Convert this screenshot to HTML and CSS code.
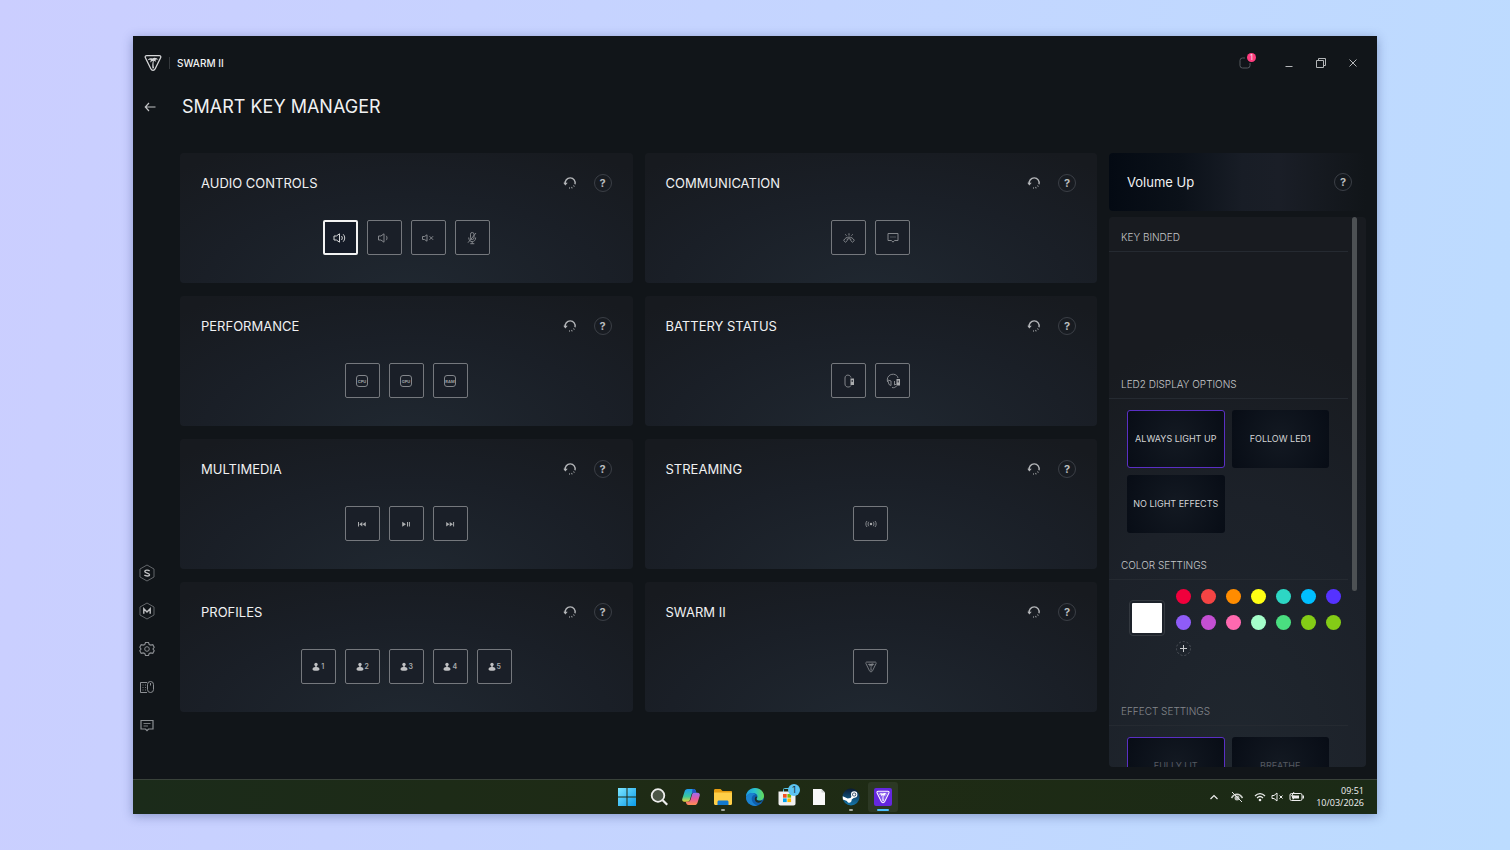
FILE: index.html
```html
<!DOCTYPE html>
<html lang="en">
<head>
<meta charset="utf-8">
<title>Swarm II - Smart Key Manager</title>
<link rel="stylesheet" href="styles.css">
</head>
<body>
<svg class="defs" aria-hidden="true">
  <symbol id="logo" viewBox="0 0 18 18">
    <path d="M2.8 1.6h12.4c1.4 0 2 1 1.4 2.2l-5.4 11c-1 2-3.400 2-4.400 0l-5.400-11c-.6-1.200 0-2.200 1.400-2.200z" fill="none" stroke="currentColor" stroke-width="1.300"/>
    <path d="M3.800 6.200c1-2.200 3-2.400 4.600-1.600 1.600-1.300 4.600-1 6 1.400-1.200-.6-2.200-.6-3 0l.9 2.100c-1-.9-1.700-1.300-2.500-1.400-.5 2.500-.3 5 .3 7.500l-1.700.3c-.3-3-.1-5.500.5-7.600-1 0-1.800.6-2.600 1.800 0-1.100.1-1.900.6-2.700-1.100-.5-2-.4-3.100.2z" fill="currentColor"/>
  </symbol>
  <symbol id="reset" viewBox="0 0 14 14">
    <path d="M2.300 8A5 5 0 1 1 12 8.200" fill="none" stroke="currentColor" stroke-width="1.400"/>
    <path d="M.3 6.800h4.400L2.400 9.600z" fill="currentColor"/>
    <path d="M11.200 9.700l-.5.700M9.300 11.500l-.8.400M6.900 12.100h-.7" stroke="currentColor" stroke-width="1.500"/>
  </symbol>
</svg>

<main class="window">
  <div class="app">
    <header class="titlebar">
      <svg class="brand-mark"><use href="#logo"/></svg>
      <span class="brand-name">SWARM II</span>
      <div class="window-controls">
        <button class="plain notice" aria-label="Notifications">
          <svg width="14" height="14" viewBox="0 0 14 14"><path d="M7 2H4.500a2.500 2.500 0 0 0-2.500 2.500v5A2.500 2.500 0 0 0 4.500 12h5A2.500 2.500 0 0 0 12 9.500V7" fill="none" stroke="#565a5f"/></svg>
          <span class="badge">1</span>
        </button>
        <button class="plain" aria-label="Minimize"><svg width="12" height="12" viewBox="0 0 12 12"><path d="M2.500 9.500h7" stroke="#b4b6b8"/></svg></button>
        <button class="plain" aria-label="Restore"><svg width="12" height="12" viewBox="0 0 12 12"><path d="M1.500 3.500h7v7h-7zM3.500 3.500v-2h7v7h-2" fill="none" stroke="#b4b6b8"/></svg></button>
        <button class="plain" aria-label="Close"><svg width="12" height="12" viewBox="0 0 12 12"><path d="M2.500 2.500l7 7M9.500 2.500l-7 7" stroke="#b4b6b8"/></svg></button>
      </div>
    </header>

    <div class="page-head">
      <button class="plain back" aria-label="Back"><svg width="12" height="10" viewBox="0 0 12 10"><path d="M11.500 5H1.500M5 1L1.300 5 5 9" fill="none" stroke="#c2c3c5" stroke-width="1.200"/></svg></button>
      <h1>SMART KEY MANAGER</h1>
    </div>

    <div class="content">
      <nav class="rail">
        <button class="plain" aria-label="Store"><svg viewBox="0 0 18 18"><path d="M9 1l7 4v8l-7 4-7-4V5z" fill="none" stroke="#63666a"/><path d="M11.600 6.900c-1-1-4.800-1.200-4.800.5S11.500 9 11.500 10.700s-4 1.500-5.100.3" fill="none" stroke="#c2c3c5" stroke-width="1.400"/></svg></button>
        <button class="plain" aria-label="Macros"><svg viewBox="0 0 18 18"><path d="M9 1l7 4v8l-7 4-7-4V5z" fill="none" stroke="#63666a"/><path d="M5.800 11.700V6.800L9 10l3.200-3.200v4.900" fill="none" stroke="#c2c3c5" stroke-width="1.400"/></svg></button>
        <button class="plain" aria-label="Settings"><svg viewBox="0 0 18 18"><path d="M7.500 2.500h3l.7 2 1.600.6 2-.4 1.400 2.600L15 9l1.200 1.700-1.400 2.600-2-.4-1.600.6-.7 2h-3l-.7-2-1.600-.6-2 .4-1.400-2.600L3 9 1.800 7.300l1.400-2.600 2 .4 1.600-.6z" fill="none" stroke="#8d9094" stroke-width="1.100"/><circle cx="9" cy="9" r="2.300" fill="none" stroke="#8d9094"/></svg></button>
        <button class="plain" aria-label="Devices"><svg viewBox="0 0 18 18"><path d="M9 14.500H2.500v-10H9" fill="none" stroke="#8d9094"/><path d="M4.500 7h1M7 7h1M4.500 9.500h1M7 9.500h1M4.500 12h1M7 12h1" stroke="#76797d"/><rect x="9.500" y="3.500" width="6" height="11" rx="3" fill="none" stroke="#8d9094"/><path d="M12.500 5v2.500" stroke="#8d9094"/></svg></button>
        <button class="plain" aria-label="Feedback"><svg viewBox="0 0 18 18"><path d="M3 4.500h12v8.500h-4.500L9 14.700 7.500 13H3z" fill="none" stroke="#8d9094" stroke-width="1.200"/><path d="M5.500 7.500h7M5.500 10h4.500" stroke="#76797d"/></svg></button>
      </nav>

      <div class="cards">
        <section class="card">
          <div class="card-head"><h2>AUDIO CONTROLS</h2><button class="plain reset" aria-label="Reset"><svg><use href="#reset"/></svg></button><button class="help" aria-label="Help">?</button></div>
          <div class="keys">
            <button class="key selected" aria-label="Volume up"><svg viewBox="0 0 16 16"><path d="M2 6v4h2.400L7.500 12.200V3.800L4.400 6zM9.500 6c1 1.200 1 2.800 0 4M11.200 4.300c2 2.200 2 5.200 0 7.400" class="line"/></svg></button>
            <button class="key" aria-label="Volume down"><svg viewBox="0 0 16 16"><path d="M2.500 6v4h2.400L8 12.200V3.800L4.900 6zM10.200 5.800c1.100 1.200 1.100 3.200 0 4.400" class="line"/></svg></button>
            <button class="key" aria-label="Mute"><svg viewBox="0 0 16 16"><path d="M2.500 6.500v3h2L7 11.200V4.800L4.500 6.500zM9.500 6.200l3.600 3.600M13.100 6.200L9.500 9.800" class="line"/></svg></button>
            <button class="key" aria-label="Mute microphone"><svg viewBox="0 0 16 16"><rect x="6.500" y="2.500" width="3.500" height="7" rx="1.700" class="line"/><path d="M4.700 7.500c0 5.500 7 5.500 7 0M8.200 11.600v2.200M6.300 13.700h4M4 12.700L12 3" class="line"/></svg></button>
          </div>
        </section>
        <section class="card">
          <div class="card-head"><h2>COMMUNICATION</h2><button class="plain reset" aria-label="Reset"><svg><use href="#reset"/></svg></button><button class="help" aria-label="Help">?</button></div>
          <div class="keys">
            <button class="key" aria-label="Answer call"><svg viewBox="0 0 16 16"><path d="M2.700 10.500c2-4.500 8.600-4.500 10.600 0l-1.800 1.700-1.800-1.700V9c-1-.4-2.400-.4-3.400 0v1.500l-1.800 1.700zM8 5.500V3.300M5.500 5.700L4.300 4.300M10.500 5.700l1.200-1.400" class="line"/></svg></button>
            <button class="key" aria-label="Chat"><svg viewBox="0 0 16 16"><path d="M3 3.500h10v7H9.500L8 12.200 6.500 10.500H3z" class="line"/><path d="M5.500 7h5" class="line" stroke-dasharray="1"/></svg></button>
          </div>
        </section>
        <section class="card">
          <div class="card-head"><h2>PERFORMANCE</h2><button class="plain reset" aria-label="Reset"><svg><use href="#reset"/></svg></button><button class="help" aria-label="Help">?</button></div>
          <div class="keys">
            <button class="key" aria-label="CPU"><svg viewBox="0 0 16 16"><rect x="2.500" y="2.500" width="11" height="11" rx="2.500" class="line"/><text x="8" y="9.600" class="chip">CPU</text></svg></button>
            <button class="key" aria-label="GPU"><svg viewBox="0 0 16 16"><rect x="2.500" y="2.500" width="11" height="11" rx="2.500" class="line"/><text x="8" y="9.600" class="chip">GPU</text></svg></button>
            <button class="key" aria-label="RAM"><svg viewBox="0 0 16 16"><rect x="2.500" y="2.500" width="11" height="11" rx="2.500" class="line"/><text x="8" y="9.600" class="chip">RAM</text></svg></button>
          </div>
        </section>
        <section class="card">
          <div class="card-head"><h2>BATTERY STATUS</h2><button class="plain reset" aria-label="Reset"><svg><use href="#reset"/></svg></button><button class="help" aria-label="Help">?</button></div>
          <div class="keys">
            <button class="key" aria-label="Mouse battery"><svg viewBox="0 0 16 16"><path d="M10 4.500C9.500 1.500 4 1 4 5v6c0 4 5.500 3.500 6 1.500" class="line"/><rect x="9.500" y="5.500" width="3.500" height="6.500" class="solid"/><path d="M11.200 7v2" stroke="#1a1f28"/></svg></button>
            <button class="key" aria-label="Headset battery"><svg viewBox="0 0 16 16"><path d="M2.500 9c-2-9 9.500-10 10.500-4M2.500 6.500l1.500 5 2 1V8L3 7M9.500 8v4l2-1M7 14.500c2 .5 3.500 0 4.500-1.500" class="line"/><rect x="11.500" y="6" width="3.500" height="6.500" class="solid"/><path d="M13.200 7.500v2" stroke="#1a1f28"/></svg></button>
          </div>
        </section>
        <section class="card">
          <div class="card-head"><h2>MULTIMEDIA</h2><button class="plain reset" aria-label="Reset"><svg><use href="#reset"/></svg></button><button class="help" aria-label="Help">?</button></div>
          <div class="keys">
            <button class="key" aria-label="Previous"><svg viewBox="0 0 16 16"><path d="M4 6h1v4.500H4zM8.300 6v4.500L5.300 8.200zM11.800 6v4.500L8.500 8.200z" class="solid"/></svg></button>
            <button class="key" aria-label="Play or pause"><svg viewBox="0 0 16 16"><path d="M4.200 5.700v5L8 8.200zM9 6h1v4.500H9zM10.900 6h1v4.500h-1z" class="solid"/></svg></button>
            <button class="key" aria-label="Next"><svg viewBox="0 0 16 16"><path d="M4.200 6v4.500l3.300-2.300zM7.700 6v4.500L11 8.200zM11.100 6h1v4.500h-1z" class="solid"/></svg></button>
          </div>
        </section>
        <section class="card">
          <div class="card-head"><h2>STREAMING</h2><button class="plain reset" aria-label="Reset"><svg><use href="#reset"/></svg></button><button class="help" aria-label="Help">?</button></div>
          <div class="keys">
            <button class="key" aria-label="Broadcast"><svg viewBox="0 0 16 16"><path d="M4 5c-1.500 1.500-1.500 4.500 0 6M5.800 5.800c-1 1.200-1 3.200 0 4.400M12 5c1.500 1.500 1.500 4.500 0 6M10.200 5.800c1 1.200 1 3.200 0 4.400" class="line"/><circle cx="8" cy="8" r="1.200" class="solid"/></svg></button>
          </div>
        </section>
        <section class="card">
          <div class="card-head"><h2>PROFILES</h2><button class="plain reset" aria-label="Reset"><svg><use href="#reset"/></svg></button><button class="help" aria-label="Help">?</button></div>
          <div class="keys">
            <button class="key profile"><svg viewBox="0 0 8 10"><circle cx="4" cy="2.500" r="1.700"/><path d="M3.300 3h1.400v2c2 .3 2.800 1.200 2.800 2.200 0 2-7 2-7 0 0-1 .8-1.900 2.800-2.200z"/></svg>1</button>
            <button class="key profile"><svg viewBox="0 0 8 10"><circle cx="4" cy="2.500" r="1.700"/><path d="M3.300 3h1.400v2c2 .3 2.800 1.200 2.800 2.200 0 2-7 2-7 0 0-1 .8-1.900 2.800-2.200z"/></svg>2</button>
            <button class="key profile"><svg viewBox="0 0 8 10"><circle cx="4" cy="2.500" r="1.700"/><path d="M3.300 3h1.400v2c2 .3 2.800 1.200 2.800 2.200 0 2-7 2-7 0 0-1 .8-1.900 2.800-2.200z"/></svg>3</button>
            <button class="key profile"><svg viewBox="0 0 8 10"><circle cx="4" cy="2.500" r="1.700"/><path d="M3.300 3h1.400v2c2 .3 2.800 1.200 2.800 2.200 0 2-7 2-7 0 0-1 .8-1.900 2.800-2.200z"/></svg>4</button>
            <button class="key profile"><svg viewBox="0 0 8 10"><circle cx="4" cy="2.500" r="1.700"/><path d="M3.300 3h1.400v2c2 .3 2.800 1.200 2.800 2.200 0 2-7 2-7 0 0-1 .8-1.900 2.800-2.200z"/></svg>5</button>
          </div>
        </section>
        <section class="card">
          <div class="card-head"><h2>SWARM II</h2><button class="plain reset" aria-label="Reset"><svg><use href="#reset"/></svg></button><button class="help" aria-label="Help">?</button></div>
          <div class="keys">
            <button class="key swarm" aria-label="Open Swarm II"><svg><use href="#logo"/></svg></button>
          </div>
        </section>
      </div>

      <aside class="side">
        <div class="side-head"><h2>Volume Up</h2><button class="help" aria-label="Help">?</button></div>
        <div class="side-body">
          <div class="side-scroll">
            <section class="binding"><h3>KEY BINDED</h3></section>
            <section class="led">
              <h3>LED2 DISPLAY OPTIONS</h3>
              <div class="options">
                <button class="option active">ALWAYS LIGHT UP</button>
                <button class="option">FOLLOW LED1</button>
                <button class="option">NO LIGHT EFFECTS</button>
              </div>
            </section>
            <section class="color">
              <h3>COLOR SETTINGS</h3>
              <div class="picker">
                <button class="current" aria-label="Current color"></button>
                <div class="swatches">
                  <button class="swatch" aria-label="Crimson" style="background:#f0003c"></button>
                  <button class="swatch" aria-label="Red" style="background:#f44444"></button>
                  <button class="swatch" aria-label="Orange" style="background:#ff8c00"></button>
                  <button class="swatch" aria-label="Yellow" style="background:#ffff14"></button>
                  <button class="swatch" aria-label="Turquoise" style="background:#2dd7c4"></button>
                  <button class="swatch" aria-label="Sky" style="background:#00bfff"></button>
                  <button class="swatch" aria-label="Indigo" style="background:#5532ff"></button>
                  <button class="swatch" aria-label="Violet" style="background:#8f5cf7"></button>
                  <button class="swatch" aria-label="Orchid" style="background:#c44fd3"></button>
                  <button class="swatch" aria-label="Pink" style="background:#ff69b0"></button>
                  <button class="swatch" aria-label="Mint" style="background:#a5ffcb"></button>
                  <button class="swatch" aria-label="Green" style="background:#4ade80"></button>
                  <button class="swatch" aria-label="Lime" style="background:#84cc16"></button>
                  <button class="swatch" aria-label="Lime 2" style="background:#84cc16"></button>
                  <button class="swatch add" aria-label="Add color"><svg viewBox="0 0 15 15"><circle cx="7.500" cy="7.500" r="7" fill="none" stroke="#50555c" stroke-dasharray="2 2"/><path d="M7.500 4v7M4 7.500h7" stroke="#c8cacc"/></svg></button>
                </div>
              </div>
            </section>
            <section class="effect">
              <h3>EFFECT SETTINGS</h3>
              <div class="options">
                <button class="option active">FULLY LIT</button>
                <button class="option">BREATHE</button>
              </div>
            </section>
          </div>
          <div class="thumb"></div>
        </div>
      </aside>
    </div>
  </div>

  <footer class="taskbar">
    <div class="tasks">
      <button class="task" aria-label="Start"><svg viewBox="0 0 20 20"><defs><linearGradient id="win" x2="1" y2="1"><stop stop-color="#7ce6ff"/><stop offset="1" stop-color="#0a9bea"/></linearGradient></defs><path d="M1 1h8.500v8.500H1zM10.500 1H19v8.500h-8.500zM1 10.500h8.500V19H1zM10.500 10.500H19V19h-8.500z" fill="url(#win)"/></svg></button>
      <button class="task" aria-label="Search"><svg viewBox="0 0 20 20"><circle cx="9" cy="8.500" r="6.300" fill="#4c5647" stroke="#eee" stroke-width="1.800"/><path d="M13.700 13.200l4.500 4.500" stroke="#eee" stroke-width="2.200"/></svg></button>
      <button class="task" aria-label="Copilot"><svg viewBox="0 0 20 20"><defs><linearGradient id="co1" x2="0" y2="1"><stop stop-color="#1c9cf0"/><stop offset=".6" stop-color="#3cc99a"/><stop offset="1" stop-color="#e8d23a"/></linearGradient><linearGradient id="co2" x2="0" y2="1"><stop stop-color="#9b6cf2"/><stop offset=".5" stop-color="#e8599f"/><stop offset="1" stop-color="#ff9050"/></linearGradient></defs><path d="M6.500 2h6c1.300 0 2 .7 2.400 2l.5 1.700h-2.600c-1.300 0-2 .6-2.400 2l-1.500 5c-.4 1.300-1 2-2.200 2H3.500c-2 0-2.700-1.400-2.200-3l2.200-7C4 2.900 5 2 6.500 2z" fill="url(#co1)"/><path d="M13.500 18h-6c-1.300 0-2-.7-2.400-2l-.4-1.300h2.400c1.300 0 2-.8 2.400-2l1.500-5c.4-1.400 1-2 2.300-2h3.200c2 0 2.700 1.400 2.200 3l-2.200 7c-.5 1.400-1.500 2.300-3 2.300z" fill="url(#co2)"/><path d="M11.500 2h1c1.300 0 2 .7 2.400 2l.5 1.700h-2.600c-.9 0-1.400.3-1.900 1z" fill="#2454c5"/></svg></button>
      <button class="task open" aria-label="File Explorer"><svg viewBox="0 0 20 20"><path d="M1 3.500c0-1 .5-1.500 1.500-1.500h5L9.500 4H18c.7 0 1 .4 1 1v11H1z" fill="#e79d10"/><path d="M1 5.500h18v11c0 .8-.5 1.500-1.500 1.500h-15C1.500 18 1 17.300 1 16.500z" fill="#ffcf48"/><path d="M4.500 18v-3c0-1 .6-1.500 1.500-1.500h8c.9 0 1.500.5 1.500 1.500v3z" fill="#1279cf"/></svg></button>
      <button class="task" aria-label="Edge"><svg viewBox="0 0 20 20"><defs><linearGradient id="ed" x2="1"><stop stop-color="#1c9de0"/><stop offset=".5" stop-color="#2bc4cd"/><stop offset="1" stop-color="#64dc53"/></linearGradient></defs><circle cx="10" cy="10" r="9" fill="#0f5fae"/><path d="M1 10C1 4.500 5 1 10 1c5.500 0 9 4 9 8 0 3-2.200 4.500-4.500 4.500-2 0-3-.8-3-1.500s1-1 1-2.500c0-2-2-3.500-4.500-3.500C5 6 2 7.500 1 10z" fill="url(#ed)"/><path d="M8 8.500c-3 3-.5 9.200 4.800 10-5 1.500-11.800-1.500-11.800-8.200C2 7 6 5.500 8.500 6.300c2 .6 2.500 1.200-.5 2.200z" fill="#1b83d0"/><path d="M11.500 12c0 1.500 3.300 2.700 6 1-1.200 2.500-3.500 3-5 2.500-2.300-.7-3.500-3.500-2-5.500.6-.8 1.500-.5 1.500.3 0 .7-.5 1-.5 1.700z" fill="#1c3029"/></svg></button>
      <button class="task" aria-label="Microsoft Store"><svg viewBox="0 0 20 20"><path d="M6.500 5V2.500c0-.8.400-1 1-1h5c.6 0 1 .2 1 1V5" fill="none" stroke="#56c5e8"/><path d="M1.500 4.500h17v12c0 1.300-.7 2-2 2h-13c-1.300 0-2-.7-2-2z" fill="#f0f0f0"/><path d="M6 7h3.700v3.700H6z" fill="#f25022"/><path d="M10.400 7h3.700v3.700h-3.700z" fill="#7fba00"/><path d="M6 11.400h3.700v3.700H6z" fill="#00a4ef"/><path d="M10.400 11.400h3.700v3.700h-3.700z" fill="#ffb900"/></svg><span class="task-badge">1</span></button>
      <button class="task" aria-label="Document"><svg viewBox="0 0 20 20"><path d="M4 2h8.500L16 5.500V18H4z" fill="#f8f8f8"/><path d="M12.500 2L16 5.500h-3.500z" fill="#cfd2d2"/></svg></button>
      <button class="task open" aria-label="Steam"><svg viewBox="0 0 20 20"><defs><linearGradient id="st" x2="0" y2="1"><stop stop-color="#0a1a33"/><stop offset="1" stop-color="#1577ab"/></linearGradient></defs><circle cx="10" cy="10" r="8.500" fill="url(#st)"/><path d="M1.700 9.300l5 2.200 2.800-.6 2.500-3.500 2 2.500-3.300 2.700c.2 3.700-3.800 4.300-4.800 1.500l-4-1.700z" fill="#fff"/><circle cx="13.200" cy="7.500" r="3.200" fill="#fff"/><circle cx="13.200" cy="7.500" r="2" fill="#173352"/><circle cx="13.200" cy="7.500" r="1.300" fill="#fff"/></svg></button>
      <button class="task current-task" aria-label="Swarm II"><svg class="swarm-tile" viewBox="0 0 20 20"><rect x="1" y="1" width="18" height="18" rx="2" fill="#6427df"/><path d="M4 4.500h12l-6 12z" fill="#8657ed"/><use href="#logo" x="3" y="3" width="14" height="14"/></svg></button>
    </div>
    <div class="tray">
      <svg width="10" height="10" viewBox="0 0 10 10"><path d="M1.500 7L5 3.500 8.500 7" fill="none" stroke="#eee" stroke-width="1.200"/></svg>
      <svg width="14" height="12" viewBox="0 0 14 12"><path d="M1.500 7c3-5 8-5 11 0" fill="none" stroke="#d4d6d2" stroke-width="1.500"/><circle cx="7" cy="7" r="2.500" fill="#b8bcb6"/><path d="M2 1l10 10" stroke="#e4e5e3"/></svg>
      <svg width="12" height="12" viewBox="0 0 12 12"><path d="M1 5c3-3.300 7-3.300 10 0M3 7c2-2 4-2 6 0" fill="none" stroke="#eee" stroke-width="1.200"/><circle cx="6" cy="9" r="1.300" fill="#eee"/></svg>
      <svg width="13" height="12" viewBox="0 0 13 12"><path d="M1 4.500v3h2L6 10V2L3 4.500zM8.500 4.500l3 3M11.500 4.500l-3 3" fill="none" stroke="#eee"/></svg>
      <svg width="16" height="12" viewBox="0 0 16 12"><rect x="1" y="2.500" width="12" height="7" rx="1.500" fill="none" stroke="#eee"/><path d="M3 4.500h7v3H3zM13.500 4.500h1.500v3h-1.500z" fill="#eee"/><path d="M5 1L2.500 5h3L4 8.500" fill="none" stroke="#eee"/></svg>
      <div class="clock"><span>09:51</span><span>10/03/2026</span></div>
    </div>
  </footer>
</main>
</body>
</html>
```
FILE: styles.css
```css
* { box-sizing: border-box; }

body {
  margin: 0;
  min-height: 100vh;
  padding: 36px 133px;
  display: flex;
  background: linear-gradient(100deg, #cbceff 0%, #c4d5ff 50%, #bcdcff 100%);
  font-family: Inter, "Liberation Sans", sans-serif;
  color: #f0f1f2;
}

h1, h2, h3 { margin: 0; font-weight: 400; }

button {
  font: inherit;
  color: inherit;
  padding: 0;
  border: 0;
  background: none;
  cursor: pointer;
}

svg { display: block; flex: none; }

.defs { position: absolute; width: 0; height: 0; }

.plain { display: flex; align-items: center; justify-content: center; }

.window {
  flex: 1;
  min-width: 0;
  display: flex;
  flex-direction: column;
  background: #111519;
  box-shadow: 0 2px 10px rgba(40, 60, 120, 0.4);
}

.app { flex: 1; min-height: 0; display: flex; flex-direction: column; }

/* Title bar */
.titlebar { height: 54px; display: flex; align-items: center; padding: 0 18px 0 11px; }
.brand-mark { width: 18px; height: 18px; color: #d5d6d8; margin-right: 7px; }
.brand-name { border-left: 1px solid #34383c; padding-left: 7px; font-size: 10px; line-height: 12px; font-weight: 500; }
.window-controls { margin-left: auto; display: flex; align-items: center; gap: 20px; }
.notice { position: relative; margin-right: 11px; }
.badge {
  position: absolute;
  top: -3px;
  right: -4px;
  width: 9px;
  height: 9px;
  border-radius: 50%;
  background: #ff3d7f;
  font-size: 7px;
  line-height: 9px;
  text-align: center;
}

/* Heading */
.page-head { height: 34px; display: flex; align-items: center; padding-left: 11px; margin-bottom: 29px; }
.back { width: 12px; margin-right: 26px; }
.page-head h1 { font-size: 18px; line-height: 24px; }

.content {
  flex: 1;
  min-height: 0;
  display: grid;
  grid-template-columns: 28px minmax(0, 1fr) 257px;
  padding: 0 11px 12px 0;
}

/* Left rail */
.rail { display: flex; flex-direction: column; justify-content: flex-end; align-items: center; gap: 20px; padding-bottom: 33px; }
.rail svg { width: 18px; height: 18px; }

/* Card grid */
.cards {
  display: grid;
  grid-template-columns: 1fr 1fr;
  align-content: start;
  gap: 13px 12px;
  margin: 0 12px 0 19px;
}
.card {
  padding: 20px 21px 28px;
  border-radius: 4px;
  background: radial-gradient(ellipse 75% 130% at 50% 110%, #202831 0%, #1a1f27 60%, #171a1f 100%);
}
.card-head { display: flex; align-items: center; height: 20px; margin-bottom: 27px; }
.card-head h2 { font-size: 13px; line-height: 20px; margin-right: auto; }
.reset { width: 14px; margin-right: 17px; color: #b4b6b9; }
.reset svg { width: 14px; height: 14px; }
.help {
  width: 18px;
  height: 18px;
  border: 1px solid #3b3f46;
  border-radius: 50%;
  color: #b9bbbe;
  font-size: 11px;
  line-height: 16px;
  font-weight: 700;
}

.keys { display: flex; justify-content: center; gap: 9px; }
.key {
  width: 35px;
  height: 35px;
  display: flex;
  align-items: center;
  justify-content: center;
  border: 1px solid #75787d;
  border-radius: 2px;
  background: #1a1f28;
  color: #83868b;
}
.key svg { width: 16px; height: 16px; }
.key.selected { border: 2px solid #f2f2f2; background: #151b27; color: #d5d6d8; }
.line { fill: none; stroke: currentColor; stroke-width: 1; }
.solid { fill: #aaacae; }
.chip { font-size: 4px; font-weight: 700; text-anchor: middle; fill: #a0a2a5; }
.profile { gap: 1px; font-size: 7px; font-weight: 600; color: #aaacae; }
.profile svg { width: 8px; height: 10px; fill: #c0c1c3; }
.swarm svg { width: 12px; height: 12px; }

/* Right panel */
.side { display: flex; flex-direction: column; min-height: 0; gap: 6px; }
.side-head {
  height: 58px;
  flex: none;
  display: flex;
  align-items: center;
  justify-content: space-between;
  padding: 0 14px 0 18px;
  border-radius: 4px;
  background: linear-gradient(90deg, #040a13 0%, #0b1119 28%, #181d26 52%, #1a1e27 66%, #111519 100%);
}
.side-head h2 { font-size: 13px; line-height: 20px; }
.side-body {
  position: relative;
  flex: 1;
  min-height: 0;
  border-radius: 4px;
  overflow: hidden;
  background: radial-gradient(ellipse 110% 80% at 50% 100%, #20272f 0%, #1c2129 60%, #181b20 100%);
}
.side-scroll { height: 0; min-height: 100%; overflow: hidden; padding-right: 18px; }
.side-scroll h3 {
  height: 35px;
  padding: 10px 0 0 12px;
  border-bottom: 1px solid #252a31;
  font-size: 10px;
  line-height: 20px;
  font-weight: 300;
  color: #c6c8ca;
}
.binding { height: 147px; }
.led { height: 181px; }
.color { height: 146px; }
.effect h3 { color: #85888d; }
.effect .option { color: #565a61; }
.thumb {
  position: absolute;
  top: 0;
  right: 9px;
  width: 5px;
  height: 68%;
  border-radius: 3px;
  background: #4d5154;
}
.options { display: grid; grid-template-columns: 1fr 1fr; gap: 7px; padding: 11px 19px 0 18px; }
.option {
  height: 58px;
  border: 1px solid transparent;
  border-radius: 3px;
  background: radial-gradient(ellipse 55% 100% at 50% 50%, #131922 0%, #080d16 100%) border-box;
  font-size: 9px;
  line-height: 12px;
  white-space: nowrap;
  color: #d3d4d6;
}
.option.active { border-color: #5a2fc4; }
.picker { display: flex; padding: 9px 0 0 20px; }
.current { width: 36px; height: 36px; margin-top: 11px; border: 1px solid #343940; border-radius: 4px; background: #fff content-box; padding: 2px; }
.swatches { display: grid; grid-template-columns: repeat(7, 15px); gap: 11px 10px; align-content: start; margin-left: 11px; }
.swatch { width: 15px; height: 15px; border-radius: 50%; }
.add svg { width: 15px; height: 15px; }

/* Taskbar */
.taskbar {
  height: 35px;
  flex: none;
  display: grid;
  grid-template-columns: 1fr auto 1fr;
  align-items: center;
  border-top: 1px solid #39423a;
  background: linear-gradient(90deg, #1b2b1a, #1f2b14 50%, #1b2a16);
}
.tasks { grid-column: 2; display: flex; gap: 2px; }
.task {
  position: relative;
  width: 30px;
  height: 30px;
  display: flex;
  align-items: center;
  justify-content: center;
  border-radius: 3px;
}
.task svg { width: 20px; height: 20px; }
.task.open::after, .current-task::after {
  content: "";
  position: absolute;
  bottom: 1px;
  left: 50%;
  width: 4px;
  height: 2px;
  margin-left: -2px;
  border-radius: 1px;
  background: #a5aaa2;
}
.current-task { background: #2c3824; color: #fff; }
.current-task::after { width: 12px; margin-left: -6px; background: #4cc2ff; }
.task-badge {
  position: absolute;
  top: 2px;
  right: 2px;
  width: 12px;
  height: 12px;
  border-radius: 50%;
  background: #5cc4f2;
  color: #12303f;
  font-size: 9px;
  line-height: 12px;
}
.tray { grid-column: 3; justify-self: end; display: flex; align-items: center; gap: 5px; padding-right: 13px; }
.tray svg:first-child { margin-right: 6px; }
.tray svg:nth-child(2) { margin-right: 5px; }
.clock { display: flex; flex-direction: column; align-items: flex-end; margin-left: 6px; font-family: "Open Sans", "Noto Sans", sans-serif; font-size: 9px; line-height: 12px; }
```
